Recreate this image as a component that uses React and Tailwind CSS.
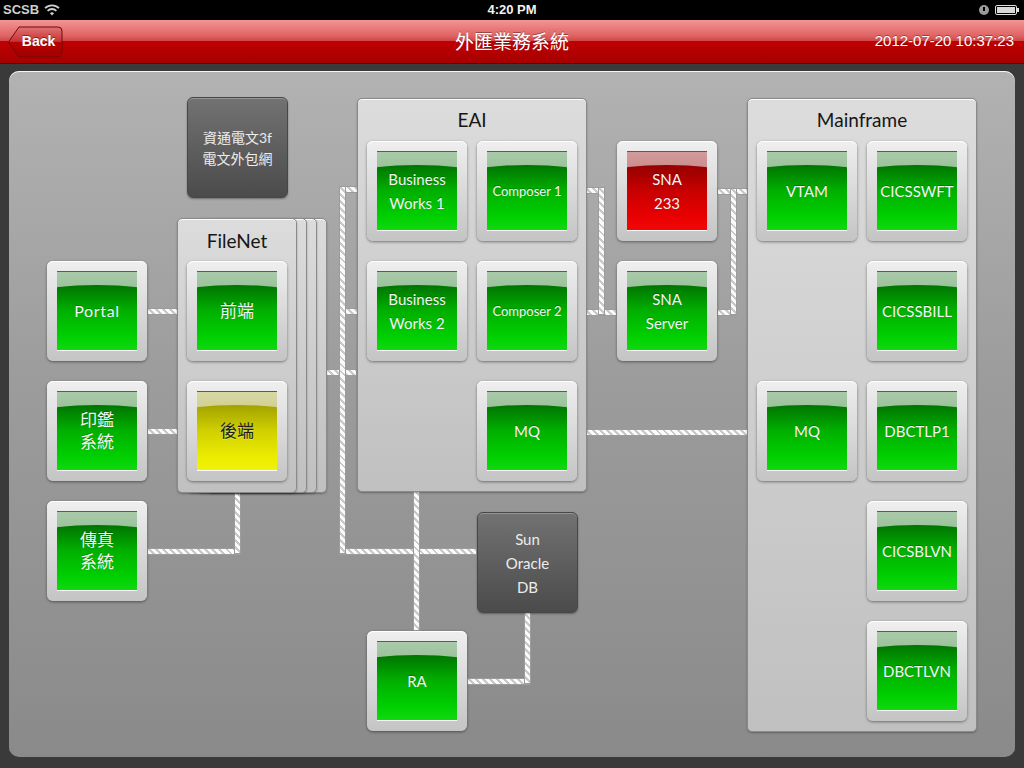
// Dashboard diagram for the 外匯業務系統 status screen.
// Nodes and connectors sit on a free canvas, so they take their place from data.

const OX = 9;
const OY = 72;

const FONT = "font-['Lato','Noto_Sans_CJK_TC',sans-serif]";

const TONES = {
  green: {
    band: 'bg-[linear-gradient(#aacaaa,#5da45d)]',
    dome: 'bg-[linear-gradient(#007400,#00b000_40%,#00d000_80%,#10d810)]',
    text: 'text-[#f4f4f4] [text-shadow:0_-1px_0_rgba(0,0,0,0.25)]',
  },
  red: {
    band: 'bg-[linear-gradient(#d29c9c,#ae5050)]',
    dome: 'bg-[linear-gradient(#940000,#c80000_40%,#ea0000_80%,#f00808)]',
    text: 'text-[#f4f4f4] [text-shadow:0_-1px_0_rgba(0,0,0,0.25)]',
  },
  yellow: {
    band: 'bg-[linear-gradient(#d8d8a4,#b0b04c)]',
    dome: 'bg-[linear-gradient(#a2a200,#d0d000_40%,#ecec00_80%,#f2f208)]',
    text: 'text-[#1c1c1c] [text-shadow:0_1px_0_rgba(255,255,255,0.35)]',
  },
};

const NODES = [
  { x: 47, y: 262, t: ['Portal'], wide: true },
  { x: 47, y: 382, t: ['印鑑', '系統'], cjk: true },
  { x: 47, y: 502, t: ['傳真', '系統'], cjk: true },
  { x: 187, y: 262, t: ['前端'], cjk: true },
  { x: 187, y: 382, t: ['後端'], cjk: true, tone: 'yellow' },
  { x: 367, y: 142, t: ['Business', 'Works 1'] },
  { x: 477, y: 142, t: ['Composer 1'], small: true },
  { x: 367, y: 262, t: ['Business', 'Works 2'] },
  { x: 477, y: 262, t: ['Composer 2'], small: true },
  { x: 477, y: 382, t: ['MQ'] },
  { x: 617, y: 142, t: ['SNA', '233'], tone: 'red' },
  { x: 617, y: 262, t: ['SNA', 'Server'] },
  { x: 757, y: 142, t: ['VTAM'] },
  { x: 757, y: 382, t: ['MQ'] },
  { x: 867, y: 142, t: ['CICSSWFT'] },
  { x: 867, y: 262, t: ['CICSSBILL'] },
  { x: 867, y: 382, t: ['DBCTLP1'] },
  { x: 867, y: 502, t: ['CICSBLVN'] },
  { x: 867, y: 622, t: ['DBCTLVN'] },
  { x: 367, y: 632, t: ['RA'] },
];

// [x1, y, x2] horizontal, centred on y
const HLINES = [
  [147, 312, 187],
  [147, 432, 187],
  [147, 552, 240],
  [326, 373, 357],
  [339, 190, 367],
  [339, 312, 367],
  [339, 552, 477],
  [467, 682, 530],
  [577, 191, 604],
  [577, 313, 617],
  [717, 192, 757],
  [717, 313, 736],
  [577, 433, 757],
];

// [x, y1, y2] vertical, centred on x
const VLINES = [
  [237, 493, 555],
  [342, 187, 555],
  [416, 492, 632],
  [527, 613, 685],
  [601, 188, 316],
  [733, 189, 316],
];

const STRIPE =
  'absolute border border-[#9c9c9c] bg-[repeating-linear-gradient(45deg,#fbfbfb_0px,#fbfbfb_3px,#c8c8c8_3px,#c8c8c8_5px)]';

function Node({ x, y, t, cjk, small, wide, tone = 'green' }) {
  const c = TONES[tone];
  const size = cjk
    ? 'text-[17px] leading-[22px]'
    : small
    ? 'text-[13px] leading-[24px]'
    : wide
    ? 'text-[16px] leading-[24px] tracking-[0.04em]'
    : 'text-[15px] leading-[24px]';
  return (
    <div
      className="absolute h-[100px] w-[100px] rounded-[6px] bg-[linear-gradient(#efefef,#c4c4c4)] p-[10px] shadow-[0_1px_3px_rgba(0,0,0,0.45),inset_0_1px_0_#ffffff]"
      style={{ left: x - OX, top: y - OY }}
    >
      <div className={`relative h-full w-full overflow-hidden border-t border-b border-t-[#5a5a5a] border-b-white ${c.band}`}>
        <div className={`absolute -inset-x-[14px] bottom-0 top-[13px] rounded-t-[50%_7px] ${c.dome}`} />
        <div className={`relative flex h-full flex-col items-center justify-center text-center ${size} ${c.text} ${FONT}`}>
          {t.map((line) => (
            <span key={line}>{line}</span>
          ))}
        </div>
      </div>
    </div>
  );
}

function DarkBox({ x, y, lines, cjk }) {
  return (
    <div
      className={`absolute flex h-[101px] w-[101px] flex-col items-center justify-center rounded-[6px] border border-[#474747] bg-[linear-gradient(#727272,#4b4b4b)] text-center text-[#ececec] shadow-[inset_0_1px_0_rgba(255,255,255,0.25),0_1px_2px_rgba(0,0,0,0.35)] ${FONT} ${
        cjk ? 'text-[14px] leading-[21px]' : 'text-[15px] leading-[24px]'
      }`}
      style={{ left: x - OX, top: y - OY }}
    >
      {lines.map((l) => (
        <span key={l}>{l}</span>
      ))}
    </div>
  );
}

function Group({ x, y, w, h, title, titleTop }) {
  return (
    <div
      className="absolute rounded-[5px] border border-[#8a8a8a] bg-[linear-gradient(#dcdcdc,#c0c0c0)] shadow-[inset_0_1px_0_rgba(255,255,255,0.9),0_1px_2px_rgba(0,0,0,0.3)]"
      style={{ left: x - OX, top: y - OY, width: w, height: h }}
    >
      {title && (
        <div
          className={`text-center text-[19px] leading-[24px] text-[#161616] ${FONT}`}
          style={{ marginTop: titleTop }}
        >
          {title}
        </div>
      )}
    </div>
  );
}

function Wifi() {
  return (
    <svg width="16" height="12" viewBox="0 0 16 12" fill="none">
      <path d="M1 4.2a10 10 0 0 1 14 0" stroke="#cfcfcf" strokeWidth="1.8" />
      <path d="M3.6 6.8a6.3 6.3 0 0 1 8.8 0" stroke="#cfcfcf" strokeWidth="1.8" />
      <path d="M8 11.5 5.9 9.3a3 3 0 0 1 4.2 0Z" fill="#cfcfcf" />
    </svg>
  );
}

function BackButton() {
  return (
    <button type="button" className="relative ml-[7px] flex h-[32px] w-[56px] items-center justify-center pl-[7px]">
      <svg className="absolute inset-0" width="56" height="32" viewBox="0 0 56 32">
        <defs>
          <linearGradient id="bk" x1="0" y1="0" x2="0" y2="1">
            <stop offset="0" stopColor="#e07474" />
            <stop offset="0.48" stopColor="#c83232" />
            <stop offset="0.5" stopColor="#b80000" />
            <stop offset="1" stopColor="#a20000" />
          </linearGradient>
        </defs>
        <path
          d="M12 1H51Q55 1 55 5V27Q55 31 51 31H12L1.5 16Z"
          fill="url(#bk)"
          stroke="#6e0a0a"
          strokeWidth="1"
        />
      </svg>
      <span className="relative font-['Liberation_Sans',sans-serif] text-[14px] font-bold text-white [text-shadow:0_-1px_0_rgba(0,0,0,0.45)]">
        Back
      </span>
    </button>
  );
}

export default function App() {
  return (
    <div className="flex h-[768px] w-[1024px] flex-col overflow-hidden bg-[#3a3a3a]">
      {/* status bar */}
      <div className="grid h-5 grid-cols-[1fr_auto_1fr] items-center bg-black px-[3px] font-['Liberation_Sans',sans-serif] text-[13px] font-bold">
        <div className="flex items-center gap-[5px] text-[#cfcfcf]">
          <span>SCSB</span>
          <Wifi />
        </div>
        <div className="text-[#f2f2f2]">4:20 PM</div>
        <div className="flex items-center justify-end gap-[6px] pr-[2px]">
          <div className="relative h-[10px] w-[10px] rounded-full bg-[#9a9a9a]">
            <div className="absolute left-[4px] top-[2px] h-[4px] w-[2px] bg-black" />
          </div>
          <div className="flex items-center">
            <div className="h-[10px] w-[22px] rounded-[2px] border border-[#e0e0e0] p-[1px]">
              <div className="h-full w-full bg-[#d8d8d8]" />
            </div>
            <div className="h-[4px] w-[2px] bg-[#e0e0e0]" />
          </div>
        </div>
      </div>

      {/* title bar */}
      <div className="grid h-11 grid-cols-[1fr_auto_1fr] items-center border-b border-[#5a0000] bg-[linear-gradient(#f49494_0%,#e06666_35%,#d24848_48%,#c00000_50%,#a60000_100%)]">
        <div>
          <BackButton />
        </div>
        <div className="font-['Noto_Sans_CJK_TC',sans-serif] text-[19px] text-white [text-shadow:0_-1px_0_rgba(0,0,0,0.35)]">
          外匯業務系統
        </div>
        <div className="pr-[10px] text-right font-['Liberation_Sans',sans-serif] text-[15px] text-white [text-shadow:0_-1px_0_rgba(0,0,0,0.35)]">
          2012-07-20 10:37:23
        </div>
      </div>

      {/* canvas */}
      <div className="flex-1 px-[9px] pb-[11px] pt-[7px]">
        <div className="relative h-full rounded-[10px] bg-[linear-gradient(#b2b2b2,#9c9c9c_45%,#8a8a8a)] shadow-[inset_0_1px_0_rgba(255,255,255,0.85)]">
          {HLINES.map(([x1, y, x2]) => (
            <div
              key={`h${x1}-${y}`}
              className={STRIPE}
              style={{ left: x1 - OX, top: y - 3 - OY, width: x2 - x1, height: 7 }}
            />
          ))}
          {VLINES.map(([x, y1, y2]) => (
            <div
              key={`v${x}-${y1}`}
              className={STRIPE}
              style={{ left: x - 3 - OX, top: y1 - OY, width: 7, height: y2 - y1 }}
            />
          ))}

          {[3, 2, 1].map((i) => (
            <Group key={i} x={177 + i * 10} y={219} w={120} h={275} />
          ))}
          <Group x={177} y={219} w={120} h={275} title="FileNet" titleTop={10} />
          <Group x={357} y={99} w={230} h={394} title="EAI" titleTop={9} />
          <Group x={747} y={99} w={230} h={634} title="Mainframe" titleTop={9} />

          <DarkBox x={187} y={98} lines={['資通電文3f', '電文外包網']} cjk />
          <DarkBox x={477} y={513} lines={['Sun', 'Oracle', 'DB']} />

          {NODES.map((n) => (
            <Node key={`${n.x}-${n.y}`} {...n} />
          ))}
        </div>
      </div>
    </div>
  );
}
